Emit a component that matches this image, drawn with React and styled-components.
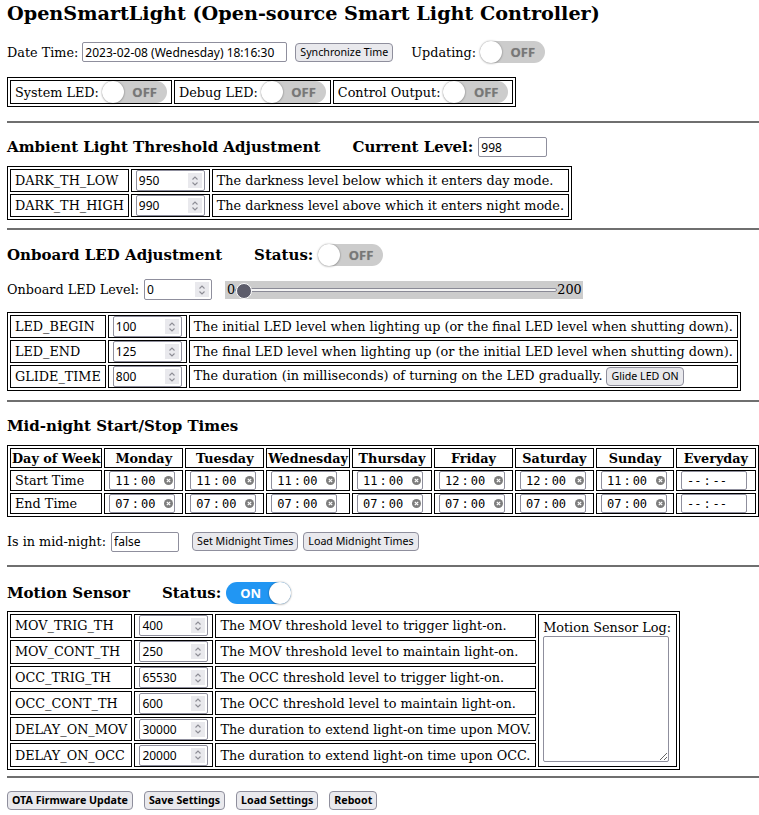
import React from "react";
import styled, { createGlobalStyle } from "styled-components";

const GlobalStyle = createGlobalStyle`
  body {
    margin: 0;
    padding: 0 0 0 7px;
    font-family: "DejaVu Serif", serif;
    font-size: 12.8px;
    color: #000;
    background: #fff;
  }
`;

const Title = styled.h2`
  margin: 0;
  padding-top: 3px;
  font-size: 19.2px;
  line-height: 22px;
  font-weight: bold;
`;

const Row = styled.div`
  display: flex;
  align-items: center;
  gap: ${(p) => p.$gap ?? 5}px;
  height: ${(p) => p.$h ?? 21}px;
  margin-top: ${(p) => p.$mt}px;
  white-space: nowrap;
`;

const HeadingRow = styled(Row)`
  gap: 0;
`;

const Heading = styled.h3`
  margin: 0;
  font-size: 15px;
  line-height: 18px;
  font-weight: bold;
`;

const HeadingLabel = styled.span`
  margin: 0 5px 0 32px;
  font-size: 15px;
  font-weight: bold;
`;

const Rule = styled.hr`
  margin: ${(p) => p.$mt}px 0 0;
  border: none;
  border-top: 2px solid #6f6f6f;
  height: 0;
`;

const Grid = styled.table`
  border: 1px solid #000;
  border-spacing: 2px;
  margin-top: ${(p) => p.$mt}px;
`;

const Cell = styled.td`
  box-sizing: border-box;
  border: 1px solid #000;
  padding: 0 4px;
  white-space: nowrap;
  vertical-align: middle;
  ${(p) => (p.$w ? `width: ${p.$w}px;` : "")}
`;

const HeadCell = styled.th`
  box-sizing: border-box;
  border: 1px solid #000;
  padding: 1.5px 1px;
  white-space: nowrap;
  font-weight: bold;
  text-align: center;
  ${(p) => (p.$w ? `width: ${p.$w}px;` : "")}
`;

const LogCell = styled(Cell)`
  vertical-align: top;
  padding: 5px 4px 4px;
`;

const LogLabel = styled.div`
  line-height: 15px;
`;

const LogArea = styled.textarea`
  display: block;
  box-sizing: border-box;
  width: 126px;
  height: 126px;
  margin: 1px 0 0;
  border: 1px solid #8f8f9d;
  border-radius: 2px;
  padding: 2px;
  font: 11.8px "Noto Sans", sans-serif;
`;

const CellLine = styled.span`
  display: inline-flex;
  align-items: center;
  gap: 3px;
  height: 22px;
`;

const TextBox = styled.input`
  box-sizing: border-box;
  width: ${(p) => p.$w}px;
  height: 20px;
  margin: 0;
  padding: 0 2px;
  border: 1px solid #8f8f9d;
  border-radius: 2px;
  font: 12px "Noto Sans", sans-serif;
  color: #000;
  background: #fff;
`;

const NumberBox = styled.span`
  display: inline-flex;
  align-items: center;
  box-sizing: border-box;
  width: ${(p) => p.$w ?? 69}px;
  height: 21px;
  padding: 0 2px 0 2px;
  border: 1px solid #8f8f9d;
  border-radius: 2px;
  background: #fff;
  vertical-align: middle;
`;

const NumberText = styled.input`
  flex: 1;
  min-width: 0;
  margin: 0;
  padding: 0;
  border: none;
  outline: none;
  background: transparent;
  font: 12px "Noto Sans", sans-serif;
  color: #000;
`;

const Spinner = styled.span`
  display: flex;
  align-items: center;
  justify-content: center;
  flex: none;
  width: 14px;
  height: 15px;
  background: #e9e9ed;
`;

const TimeBox = styled.span`
  display: inline-flex;
  align-items: center;
  box-sizing: border-box;
  width: 66px;
  height: 19px;
  padding: 0 1px 0 5px;
  border: 1px solid #8f8f9d;
  border-radius: 2px;
  background: #fff;
  font: 12px "DejaVu Sans Mono", monospace;
  vertical-align: middle;
`;

const TimeSep = styled.span`
  margin: 0 2px;
`;

const ClearIcon = styled.svg`
  margin-left: auto;
  flex: none;
`;

const Button = styled.button`
  box-sizing: border-box;
  height: 19px;
  margin: 0;
  padding: 0 4px;
  border: 1px solid #8f8f9d;
  border-radius: 4px;
  background: #e9e9ed;
  color: #000;
  font: ${(p) => (p.$bold ? "bold " : "")}10.67px "Noto Sans", sans-serif;
  line-height: 1;
  white-space: nowrap;
`;

const ButtonBar = styled(Row)`
  gap: 11px;
  height: 19px;
`;

const Switch = styled.span`
  position: relative;
  display: inline-block;
  flex: none;
  width: 65px;
  height: 22px;
  border-radius: 11px;
  background: ${(p) => (p.$on ? "#2196f3" : "#cccccc")};
`;

const Knob = styled.span`
  position: absolute;
  top: 0;
  ${(p) => (p.$on ? "right: 0;" : "left: 0;")}
  width: 22px;
  height: 22px;
  border-radius: 50%;
  background: #fff;
  box-shadow: 0 0 2px rgba(0, 0, 0, 0.35), 0 1px 2px rgba(0, 0, 0, 0.15);
`;

const SwitchText = styled.span`
  position: absolute;
  top: 0;
  bottom: 0;
  display: flex;
  align-items: center;
  ${(p) => (p.$on ? "left: 14px;" : "right: 10px;")}
  font: bold 13px "Noto Sans", sans-serif;
  color: ${(p) => (p.$on ? "#fff" : "#777777")};
  text-shadow: ${(p) => (p.$on ? "none" : "0 0 1px rgba(0,0,0,0.2)")};
`;

const SliderBox = styled.span`
  display: inline-flex;
  align-items: center;
  height: 18px;
  margin-left: 8px;
  padding: 0 1px 0 2px;
  background: #cccccc;
`;

const Range = styled.input`
  -webkit-appearance: none;
  appearance: none;
  width: 322px;
  height: 18px;
  margin: 0;
  background: transparent;

  &::-webkit-slider-runnable-track {
    height: 4px;
    box-sizing: border-box;
    border: 1px solid #8a8a96;
    border-radius: 2px;
    background: #f4f4f4;
  }

  &::-webkit-slider-thumb {
    -webkit-appearance: none;
    box-sizing: border-box;
    width: 16px;
    height: 16px;
    margin-top: -6px;
    border-radius: 50%;
    border: 1px solid #fff;
    background: #5d5d6b;
  }
`;

const SpinIcon = () => (
  <svg width="8" height="12" viewBox="0 0 8 12" fill="none" stroke="#8d8d95" strokeWidth="1.1">
    <path d="M1.5 4.5 L4 2 L6.5 4.5" />
    <path d="M1.5 7.5 L4 10 L6.5 7.5" />
  </svg>
);

const NumberField = ({ value, w }) => (
  <NumberBox $w={w}>
    <NumberText type="text" defaultValue={value} />
    <Spinner>
      <SpinIcon />
    </Spinner>
  </NumberBox>
);

const TimeField = ({ value }) => {
  const [h, m] = value ? value.split(":") : ["--", "--"];
  return (
    <TimeBox>
      {h}
      <TimeSep>:</TimeSep>
      {m}
      {value && (
        <ClearIcon width="9" height="9" viewBox="0 0 9 9">
          <circle cx="4.5" cy="4.5" r="4.5" fill="#7d7d7d" />
          <path d="M2.8 2.8 L6.2 6.2 M6.2 2.8 L2.8 6.2" stroke="#fff" strokeWidth="1.2" />
        </ClearIcon>
      )}
    </TimeBox>
  );
};

const Toggle = ({ on }) => (
  <Switch $on={on}>
    <SwitchText $on={on}>{on ? "ON" : "OFF"}</SwitchText>
    <Knob $on={on} />
  </Switch>
);

const ambientRows = [
  ["DARK_TH_LOW", "950", "The darkness level below which it enters day mode."],
  ["DARK_TH_HIGH", "990", "The darkness level above which it enters night mode."],
];

const ledRows = [
  ["LED_BEGIN", "100", "The initial LED level when lighting up (or the final LED level when shutting down)."],
  ["LED_END", "125", "The final LED level when lighting up (or the initial LED level when shutting down)."],
  ["GLIDE_TIME", "800", "The duration (in milliseconds) of turning on the LED gradually."],
];

const days = [
  ["Monday", 79, "11:00", "07:00"],
  ["Tuesday", 79, "11:00", "07:00"],
  ["Wednesday", 82, "11:00", "07:00"],
  ["Thursday", 80, "11:00", "07:00"],
  ["Friday", 79, "12:00", "07:00"],
  ["Saturday", 79, "12:00", "07:00"],
  ["Sunday", 78, "11:00", "07:00"],
  ["Everyday", 80, "", ""],
];

const motionRows = [
  ["MOV_TRIG_TH", "400", "The MOV threshold level to trigger light-on."],
  ["MOV_CONT_TH", "250", "The MOV threshold level to maintain light-on."],
  ["OCC_TRIG_TH", "65530", "The OCC threshold level to trigger light-on."],
  ["OCC_CONT_TH", "600", "The OCC threshold level to maintain light-on."],
  ["DELAY_ON_MOV", "30000", "The duration to extend light-on time upon MOV."],
  ["DELAY_ON_OCC", "20000", "The duration to extend light-on time upon OCC."],
];

export default function App() {
  return (
    <>
      <GlobalStyle />
      <Title>OpenSmartLight (Open-source Smart Light Controller)</Title>

      <Row $mt={15} $h={24} $gap={4}>
        <span>Date Time:</span>
        <TextBox $w={205} defaultValue="2023-02-08 (Wednesday) 18:16:30" />
        <Button style={{ marginLeft: 4 }}>Synchronize Time</Button>
        <span style={{ marginLeft: 14 }}>Updating:</span>
        <Toggle />
      </Row>

      <Grid $mt={13}>
        <tbody>
          <tr>
            <Cell>
              <CellLine>System LED:<Toggle /></CellLine>
            </Cell>
            <Cell>
              <CellLine>Debug LED:<Toggle /></CellLine>
            </Cell>
            <Cell>
              <CellLine>Control Output:<Toggle /></CellLine>
            </Cell>
          </tr>
        </tbody>
      </Grid>

      <Rule $mt={14} />

      <HeadingRow $mt={14} $h={20}>
        <Heading>Ambient Light Threshold Adjustment</Heading>
        <HeadingLabel>Current Level:</HeadingLabel>
        <TextBox $w={69} defaultValue="998" />
      </HeadingRow>

      <Grid $mt={9}>
        <tbody>
          {ambientRows.map(([name, value, text], i) => (
            <tr key={name}>
              <Cell $w={i === 0 ? 118 : undefined}>{name}</Cell>
              <Cell $w={i === 0 ? 79 : undefined}><NumberField value={value} /></Cell>
              <Cell $w={i === 0 ? 356 : undefined}>{text}</Cell>
            </tr>
          ))}
        </tbody>
      </Grid>

      <Rule $mt={8} />

      <HeadingRow $mt={14} $h={22}>
        <Heading>Onboard LED Adjustment</Heading>
        <HeadingLabel>Status:</HeadingLabel>
        <Toggle />
      </HeadingRow>

      <Row $mt={13} $h={21}>
        <span>Onboard LED Level:</span>
        <NumberField value="0" w={68} />
        <SliderBox>
          0<Range type="range" min="0" max="200" defaultValue="0" />200
        </SliderBox>
      </Row>

      <Grid $mt={12}>
        <tbody>
          {ledRows.map(([name, value, text], i) => (
            <tr key={name}>
              <Cell $w={i === 0 ? 95 : undefined}>{name}</Cell>
              <Cell $w={i === 0 ? 79 : undefined}><NumberField value={value} /></Cell>
              <Cell $w={i === 0 ? 549 : undefined}>
                {text}
                {name === "GLIDE_TIME" && <Button style={{ marginLeft: 4 }}>Glide LED ON</Button>}
              </Cell>
            </tr>
          ))}
        </tbody>
      </Grid>

      <Rule $mt={9} />

      <HeadingRow $mt={15} $h={18}>
        <Heading>Mid-night Start/Stop Times</Heading>
      </HeadingRow>

      <Grid $mt={10}>
        <tbody>
          <tr>
            <HeadCell $w={91}>Day of Week</HeadCell>
            {days.map(([d, w]) => (
              <HeadCell key={d} $w={w}>{d}</HeadCell>
            ))}
          </tr>
          <tr>
            <Cell>Start Time</Cell>
            {days.map(([d, , start]) => (
              <Cell key={d}><TimeField value={start} /></Cell>
            ))}
          </tr>
          <tr>
            <Cell>End Time</Cell>
            {days.map(([d, , , end]) => (
              <Cell key={d}><TimeField value={end} /></Cell>
            ))}
          </tr>
        </tbody>
      </Grid>

      <Row $mt={14} $h={21}>
        <span>Is in mid-night:</span>
        <TextBox $w={68} defaultValue="false" />
        <Button style={{ marginLeft: 8 }}>Set Midnight Times</Button>
        <Button>Load Midnight Times</Button>
      </Row>

      <Rule $mt={13} />

      <HeadingRow $mt={15} $h={22}>
        <Heading>Motion Sensor</Heading>
        <HeadingLabel>Status:</HeadingLabel>
        <Toggle on />
      </HeadingRow>

      <Grid $mt={7}>
        <tbody>
          {motionRows.map(([name, value, text], i) => (
            <tr key={name}>
              <Cell $w={i === 0 ? 121 : undefined}>{name}</Cell>
              <Cell $w={i === 0 ? 79 : undefined}><NumberField value={value} /></Cell>
              <Cell $w={i === 0 ? 320 : undefined}>{text}</Cell>
              {i === 0 && (
                <LogCell rowSpan={6} $w={139}>
                  <LogLabel>Motion Sensor Log:</LogLabel>
                  <LogArea />
                </LogCell>
              )}
            </tr>
          ))}
        </tbody>
      </Grid>

      <Rule $mt={6} />

      <ButtonBar $mt={13}>
        <Button $bold>OTA Firmware Update</Button>
        <Button $bold>Save Settings</Button>
        <Button $bold>Load Settings</Button>
        <Button $bold>Reboot</Button>
      </ButtonBar>
    </>
  );
}
